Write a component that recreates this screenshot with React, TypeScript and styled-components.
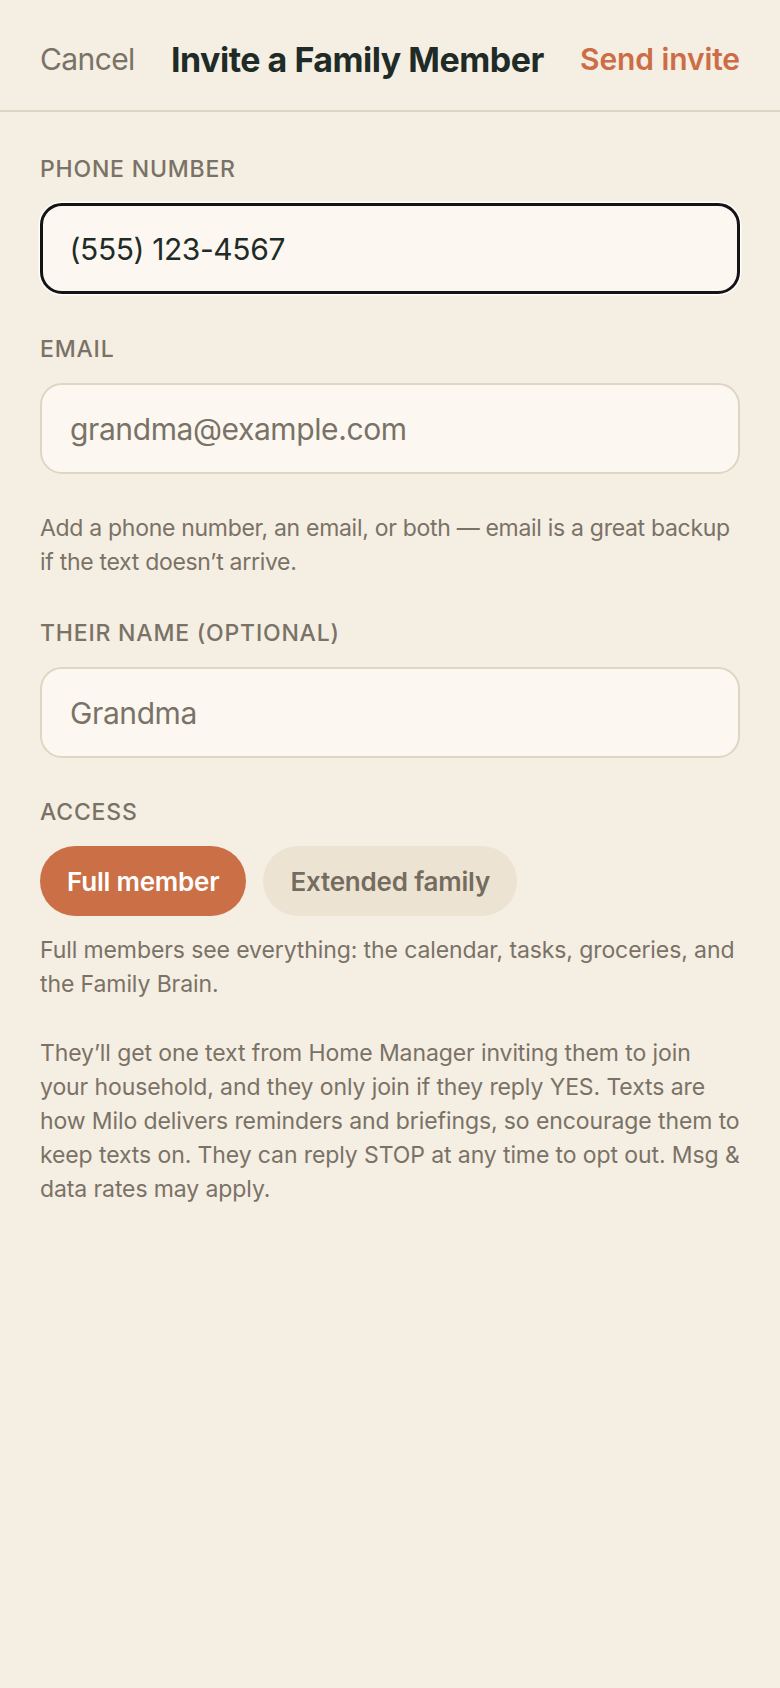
import React, { useState } from "react";
import styled, { createGlobalStyle } from "styled-components";

const Global = createGlobalStyle`
  html, body { margin: 0; padding: 0; background: #f5eee3; }
  body { font-family: "Inter", "Noto Sans", sans-serif; -webkit-font-smoothing: antialiased; }
  * { box-sizing: border-box; }
`;

const Page = styled.div`
  min-height: 1688px;
  background: #f5eee3;
`;

const Header = styled.header`
  height: 112px;
  display: flex;
  align-items: center;
  justify-content: space-between;
  padding: 8px 40px 0;
  border-bottom: 2px solid #ded4c3;
`;

const HeaderButton = styled.button<{ $primary?: boolean }>`
  background: none;
  border: none;
  padding: 0;
  font-family: inherit;
  font-size: 30px;
  letter-spacing: ${(p) => (p.$primary ? "-0.1px" : "-0.6px")};
  font-weight: ${(p) => (p.$primary ? 600 : 400)};
  color: ${(p) => (p.$primary ? "#cc6d45" : "#7a7266")};
  cursor: pointer;
`;

const Title = styled.h1`
  margin: 0;
  font-size: 34px;
  font-weight: 700;
  letter-spacing: -0.5px;
  color: #1f2b26;
`;

const Content = styled.main`
  padding: 42px 40px 0;
  display: flex;
  flex-direction: column;
`;

const Field = styled.div<{ $mt?: number }>`
  display: flex;
  flex-direction: column;
  gap: 19px;
  margin-top: ${(p) => p.$mt ?? 0}px;
`;

const Label = styled.label`
  font-size: 23px;
  line-height: 30px;
  font-weight: 500;
  letter-spacing: 0.8px;
  text-transform: uppercase;
  color: #7a7266;
`;

const Input = styled.input<{ $focused?: boolean }>`
  height: 91px;
  width: 100%;
  border-radius: 22px;
  background: #fcf8f1;
  border: ${(p) => (p.$focused ? "3.5px solid #141414" : "2px solid #dfd5c3")};
  box-shadow: ${(p) => (p.$focused ? "0 0 0 1.5px #ffffff" : "none")};
  padding: 0 ${(p) => (p.$focused ? 26.5 : 28)}px;
  font-family: inherit;
  font-size: 30px;
  letter-spacing: -0.4px;
  color: #1f2b26;
  outline: none;
  &::placeholder { color: #7a7266; }
`;

const Help = styled.p<{ $mt?: number; $tight?: boolean }>`
  margin: ${(p) => p.$mt ?? 0}px 0 0;
  font-size: 23px;
  line-height: 34px;
  font-weight: 400;
  letter-spacing: ${(p) => (p.$tight ? "-0.3px" : "-0.1px")};
  color: #7a7266;
`;

const Pills = styled.div`
  display: flex;
  gap: 17px;
`;

const Pill = styled.button<{ $active?: boolean }>`
  height: 70px;
  border-radius: 35px;
  border: none;
  padding: 0 27px;
  font-family: inherit;
  font-size: 26px;
  font-weight: 600;
  letter-spacing: -0.2px;
  background: ${(p) => (p.$active ? "#cb6f47" : "#ece3d3")};
  color: ${(p) => (p.$active ? "#ffffff" : "#746c5f")};
  cursor: pointer;
`;

export default function App() {
  const [access, setAccess] = useState<"full" | "extended">("full");
  return (
    <Page>
      <Global />
      <Header>
        <HeaderButton>Cancel</HeaderButton>
        <Title>Invite a Family Member</Title>
        <HeaderButton $primary>Send invite</HeaderButton>
      </Header>
      <Content>
        <Field>
          <Label>Phone number</Label>
          <Input $focused defaultValue="(555) 123-4567" />
        </Field>
        <Field $mt={40}>
          <Label>Email</Label>
          <Input placeholder="grandma@example.com" />
        </Field>
        <Help $mt={37} $tight>
          Add a phone number, an email, or both — email is a great backup if the text doesn’t arrive.
        </Help>
        <Field $mt={39}>
          <Label>Their name (optional)</Label>
          <Input placeholder="Grandma" />
        </Field>
        <Field $mt={39}>
          <Label>Access</Label>
          <Pills>
            <Pill $active={access === "full"} onClick={() => setAccess("full")}>Full member</Pill>
            <Pill $active={access === "extended"} onClick={() => setAccess("extended")}>Extended family</Pill>
          </Pills>
        </Field>
        <Help $mt={17}>
          Full members see everything: the calendar, tasks, groceries, and the Family Brain.
        </Help>
        <Help $mt={35}>
          They’ll get one text from Home Manager inviting them to join your household, and they only join if they reply YES. Texts are how Milo delivers reminders and briefings, so encourage them to keep texts on. They can reply STOP at any time to opt out. Msg &amp; data rates may apply.
        </Help>
      </Content>
    </Page>
  );
}
